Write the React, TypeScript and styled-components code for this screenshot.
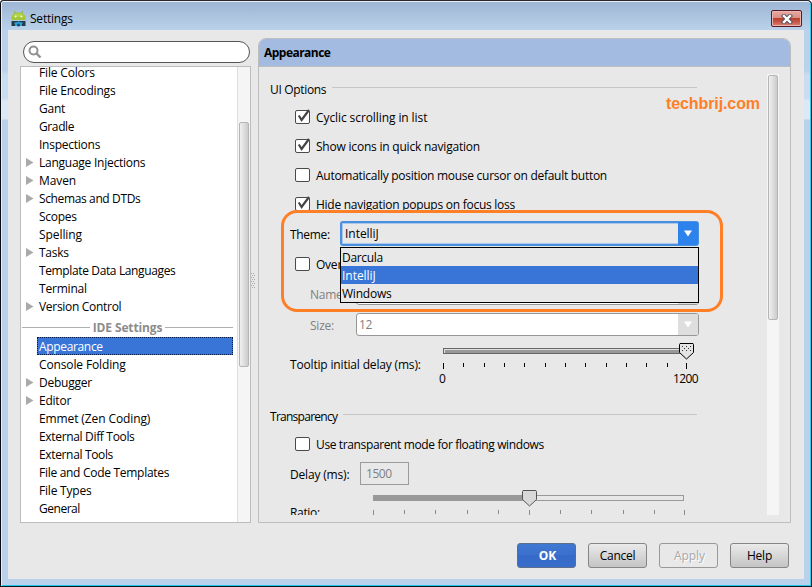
import React from 'react';
import styled, { createGlobalStyle, css } from 'styled-components';

const Global = createGlobalStyle`
  * { box-sizing: border-box; }
  html, body { margin: 0; padding: 0; }
  body {
    width: 812px;
    height: 587px;
    overflow: hidden;
    font-family: "Open Sans", "Noto Sans", sans-serif;
    font-size: 12px;
    line-height: 18px;
    color: #000;
  }
`;

const Frame = styled.div`
  position: relative;
  display: flex;
  flex-direction: column;
  width: 812px;
  height: 587px;
  padding: 1px 2px 2px 2px;
  background: linear-gradient(#9bb4d2 0, #b9d1ea 30px, #b9d1ea 70px, #cadcef 75px, #cadcef 98px, #dbe8f6 101px, #dbe8f6 119px, #b9d1ea 120px, #b9d1ea 100%);
  box-shadow: inset 0 1px #29272c, inset 1px 0 #0b0b0d, inset -1px 0 #0b2026, inset 0 -1px #071a20,
    inset 0 2px #e8f1fa, inset 2px 0 #dff0fb, inset -2px 0 #35cdee, inset 0 -2px #25c5ea;
  border-radius: 4px 5px 0 0;
`;

const TitleBar = styled.header`
  display: flex;
  align-items: flex-start;
  height: 29px;
  padding: 9px 8px 0 9px;
`;

const Label = styled.span<{ $track?: number; $muted?: boolean }>`
  letter-spacing: ${p => (p.$track ?? -0.2) - 0.03}px;
  white-space: nowrap;
  ${p => p.$muted && css`color: #808080;`}
`;

const WindowTitle = styled(Label)`
  flex: 1;
  margin-left: 4px;
`;

const CloseButton = styled.button`
  display: flex;
  align-items: center;
  justify-content: center;
  width: 31px;
  height: 17px;
  padding: 0;
  border: 1px solid #561a24;
  border-radius: 2px;
  background: linear-gradient(#e8aaa2 0, #dc8e84 45%, #b8402c 50%, #c8594a 75%, #d98478 100%);
  box-shadow: inset 0 0 0 1px #e9b5ae;
`;

const Client = styled.main`
  display: flex;
  flex-direction: column;
  flex: 1;
  margin: 0 6px 6px;
  background: #e8e8e8;
`;

const Columns = styled.div`
  display: flex;
  height: 493px;
  padding: 8px 0 0 12px;
`;

const Sidebar = styled.aside`
  display: flex;
  flex-direction: column;
  width: 231px;
  padding-top: 3px;
`;

const SearchField = styled.div`
  display: flex;
  align-items: center;
  width: 227px;
  height: 22px;
  margin: 0 0 3px 3px;
  padding-left: 4px;
  border: 1px solid #555;
  border-radius: 11px;
  background: #fff;
`;

const TreeBox = styled.div`
  display: flex;
  flex: 1;
  overflow: hidden;
  border: 1px solid #bcbcbc;
  background: #fff;
`;

const TreeList = styled.div`
  flex: 1;
  height: 480px;
  margin-top: -4px;
`;

const TreeRow = styled.div`
  display: flex;
  align-items: flex-start;
  height: 18px;
  padding: 0 4px 0 5px;
`;

const ArrowSlot = styled.span`
  display: flex;
  width: 11px;
  margin-top: 5px;
`;

const TreeText = styled(Label)<{ $selected?: boolean }>`
  flex: 1;
  height: 18px;
  padding: 1px 0 0 2px;
  ${p => p.$selected
    ? css`
        padding: 0 0 0 1px;
        border: 1px dotted #001a4d;
        background: #3875d7;
        color: #fff;
        line-height: 18px;
      `
    : ''}
`;

const Divider = styled.div`
  display: flex;
  align-items: center;
  gap: 3px;
  height: 22px;
  padding: 3px 4px 0 1px;
  color: #8c8c8c;
  font-weight: bold;
  &::before, &::after {
    content: "";
    flex: 1;
    height: 1px;
    margin-top: -1px;
    background: #b0b0b0;
  }
`;

const TreeScroll = styled.div`
  width: 13px;
  border-left: 1px solid #dedede;
  background: #f5f5f5;
  padding: 55px 1px 0;
`;

const Thumb = styled.div`
  width: 10px;
  height: 245px;
  border: 1px solid #b5b5b5;
  border-radius: 2px;
  background: linear-gradient(90deg, #f0f0f0, #e2e2e2 40%, #cbcbcb);
`;

const Splitter = styled.div`
  display: flex;
  align-items: center;
  width: 7px;
`;

const Panel = styled.section`
  position: relative;
  display: flex;
  flex-direction: column;
  width: 533px;
  border: 1px solid #bdbdbd;
  border-radius: 8px 8px 0 0;
`;

const PanelHeader = styled.h1`
  height: 28px;
  margin: 0;
  padding: 5px 5px 0;
  border-bottom: 1px solid #bdbdbd;
  border-radius: 7px 7px 0 0;
  background: #a3bae1;
  font-size: 12px;
  line-height: 18px;
`;

const PanelBody = styled.div`
  display: flex;
  height: 448px;
  overflow: hidden;
`;

const Form = styled.div`
  width: 508px;
  padding: 12px 70px 0 11px;
`;

const PanelScroll = styled.div`
  width: 12px;
  margin-top: 7px;
  padding: 1px;
  background: #f5f5f5;
`;

const SectionTitle = styled.div<{ $gap: number }>`
  display: flex;
  align-items: center;
  gap: 6px;
  height: 20px;
  margin: ${p => p.$gap}px 0 4px;
  padding-top: 1px;
  &::after {
    content: "";
    flex: 1;
    height: 1px;
    margin-top: -4px;
    background: #c6c6c6;
  }
`;

const CheckRow = styled.label`
  display: flex;
  align-items: center;
  gap: 6px;
  height: 29px;
  padding: 0 0 0 25px;
  svg { margin-top: -2px; }
`;

const Field = styled.div<{ $indent: number; $labelWidth: number }>`
  display: grid;
  grid-template-columns: ${p => p.$labelWidth}px 1fr;
  align-items: center;
  height: 31px;
  margin-right: -2px;
  padding: 0 0 2px ${p => p.$indent}px;
  > span { padding-top: 2px; }
`;

const Combo = styled.div<{ $active?: boolean }>`
  display: flex;
  justify-content: space-between;
  height: 23px;
  padding-left: 2px;
  border: 1px solid #979797;
  border-radius: 3px;
  background: #fff;
  line-height: 21px;
  ${p => p.$active && css`
    height: 25px;
    margin-top: -1px;
    padding-left: 3px;
    border: 2px solid #4a90dd;
    background: #e8e8e8;
    box-shadow: inset 0 0 0 1px #a9c8ec;
  `}
`;

const ComboArrow = styled.span<{ $active?: boolean }>`
  display: flex;
  align-items: center;
  justify-content: center;
  width: 20px;
  border-radius: 0 2px 2px 0;
  background: ${p => (p.$active ? '#2e82ec' : '#dedede')};
  ${p => p.$active && css`
    margin: -1px -1px -1px 0;
    width: 20px;
  `}
`;

const ThemeField = styled.div`
  position: relative;
`;

const Popup = styled.ul`
  position: absolute;
  z-index: 1;
  top: 25px;
  left: 0;
  right: 0;
  margin: 0;
  padding: 0;
  border: 1px solid #000;
  background: #e8e8e8;
  list-style: none;
`;

const Option = styled.li<{ $selected?: boolean }>`
  height: 18px;
  padding: 1px 0 0 1px;
  ${p => p.$selected && css`
    background: #3875d7;
    color: #fff;
  `}
`;

const SliderRow = styled.div<{ $top: number }>`
  display: flex;
  height: 50px;
  padding: ${p => p.$top}px 0 0 20px;
`;

const SliderLabel = styled(Label)<{ $top: number; $width: number }>`
  width: ${p => p.$width}px;
  margin-top: ${p => p.$top}px;
`;

const SliderColumn = styled.div`
  margin-right: -4px;
`;

const Scale = styled.div`
  display: flex;
  justify-content: space-between;
  margin: -8px 0 0 -1px;
  width: 259px;
`;

const NumberField = styled.div`
  width: 49px;
  height: 23px;
  padding-left: 5px;
  border: 1px solid #9b9b9b;
  line-height: 22px;
`;

const Highlight = styled.div`
  position: absolute;
  z-index: 2;
  left: 22px;
  top: 171px;
  width: 442px;
  height: 102px;
  border: 3px solid #ff7f27;
  border-radius: 16px;
`;

const Watermark = styled.div`
  position: absolute;
  left: 407px;
  top: 55px;
  color: #ff7f27;
  font: bold 16px/20px "Liberation Sans", sans-serif;
  letter-spacing: -0.1px;
`;

const Footer = styled.footer`
  display: flex;
  justify-content: flex-end;
  gap: 12px;
  padding: 20px 15px 0 0;
`;

const Button = styled.button<{ $kind?: 'primary' | 'disabled' }>`
  width: 59px;
  height: 25px;
  padding: 0;
  border: 1px solid #858585;
  border-radius: 3px;
  background: linear-gradient(#eaeaea, #c4c4c4);
  color: #000;
  font: inherit;
  line-height: 23px;
  ${p => p.$kind === 'primary' && css`
    border-color: #5c6e8c;
    padding-left: 2px;
    background: linear-gradient(#3f78d2 0, #3b70cd 48%, #366ac8 50%, #396dca 100%);
    color: #fff;
    font-weight: bold;
  `}
  ${p => p.$kind === 'disabled' && css`
    border-color: #999;
    padding-left: 2px;
    background: #e8e8e8;
    color: #a8a8a8;
    text-shadow: 1px 1px #fff;
  `}
`;

const AndroidIcon = () => (
  <svg width="15" height="17" viewBox="0 0 15 17">
    <path d="M3 1l2 3M12 1l-2 3" stroke="#8fae35" strokeWidth="1" />
    <path d="M0.5 10V8c0-3.500 3-5.500 7-5.500s7 2 7 5.500v2z" fill="#a4c639" />
    <path d="M2 7c1-2.500 3-3.500 5.500-3.500S12 4.500 13 7z" fill="#b5d44c" />
    <circle cx="4.600" cy="6.500" r=".9" fill="#f2f8dc" />
    <circle cx="10.400" cy="6.500" r=".9" fill="#f2f8dc" />
    <path d="M0.500 11h14v5h-14z" fill="#263a48" />
    <path d="M4 16v-2l-1-1 2-1 1 .6 1-1h1l1 1 1-.6 2 1-1 1v2z" fill="#2a9fd8" />
    <circle cx="7.500" cy="15" r="1.500" fill="#1d4965" />
  </svg>
);

const CloseIcon = () => (
  <svg width="12" height="10" viewBox="0 0 12 10">
    <path d="M3 2l6 6M9 2l-6 6" stroke="#4c4f5f" strokeWidth="4.200" strokeLinecap="square" />
    <path d="M3 2l6 6M9 2l-6 6" stroke="#fff" strokeWidth="2.400" strokeLinecap="square" />
  </svg>
);

const SearchIcon = () => (
  <svg width="14" height="14" viewBox="0 0 14 14">
    <circle cx="5.500" cy="5.500" r="4" fill="none" stroke="#919191" strokeWidth="2" />
    <path d="M8.500 8.500l4 4" stroke="#919191" strokeWidth="2.400" />
  </svg>
);

const TreeArrow = () => (
  <svg width="8" height="9" viewBox="0 0 8 9">
    <path d="M0 0l7.500 4.500L0 9z" fill="#aaa" />
  </svg>
);

const DownArrow = () => (
  <svg width="8" height="7" viewBox="0 0 8 7">
    <path d="M0 .5h8L4 6.500z" fill="#fff" />
  </svg>
);

const Grip = () => (
  <svg width="5" height="16" viewBox="0 0 5 16">
    {[0, 2, 4, 6, 8, 10, 12, 14].map(y => (
      <path key={y} d={y % 4 ? `M1 ${y}h1v1h-1zM3 ${y}h1v1h-1z` : `M0 ${y}h1v1h-1zM2 ${y}h1v1h-1z`} fill="#aaa" />
    ))}
  </svg>
);

const CheckBox = ({ checked }: { checked?: boolean }) => (
  <svg width="15" height="16" viewBox="0 0 15 16">
    <rect x=".5" y="1.500" width="14" height="13" rx="1.500" fill="#fff" stroke="#4a4a4a" />
    {checked && <path d="M3.800 6.500L6.600 11 14 1" fill="none" stroke="#454545" strokeWidth="2.200" />}
  </svg>
);

const thumb = (x: number) => `M${x - 6.5} .5h13l.5 1v8l-7 6.500-7-6.500v-8z`;

const DelaySlider = () => {
  const ticks = [3, 23, 44, 64, 84, 105, 125, 145, 166, 186, 206, 227, 246];
  return (
    <svg width="256" height="30" viewBox="0 0 256 30" shapeRendering="crispEdges">
      <path d="M3 5h243v6H3z" fill="#666" />
      <path d="M4 6h242v4H4z" fill="#e0e0e0" />
      <path d="M5 7h241v3H5z" fill="#989898" />
      <path d={thumb(246.5)} fill="#e4e4e4" stroke="#000" shapeRendering="auto" />
      <path d="M242 3h1v1h-1zM246 3h1v1h-1zM250 3h1v1h-1zM244 5h1v1h-1zM248 5h1v1h-1zM242 7h1v1h-1zM246 7h1v1h-1zM250 7h1v1h-1z" fill="#333" />
      {ticks.map((x, i) => (
        <rect key={x} x={x} y={20} width="1" height={i === 0 || i === 12 ? 6 : 4} fill="#000" />
      ))}
    </svg>
  );
};

const RatioSlider = () => {
  const ticks = [0, 31, 62, 94, 125, 156, 187, 218, 250, 281, 311];
  return (
    <svg width="314" height="30" viewBox="0 0 314 30" shapeRendering="crispEdges">
      <path d="M0 5h311v6H0z" fill="#999" />
      <path d="M157 6h153v4H157z" fill="#e8e8e8" />
      <path d={thumb(156.5)} fill="#d8d8d8" stroke="#555" shapeRendering="auto" />
      {ticks.map((x, i) => (
        <rect key={x} x={x} y={20} width="1" height={i % 5 === 0 ? 6 : 4} fill="#8c8c8c" />
      ))}
    </svg>
  );
};

type Item = [name: string, track: number, expandable?: boolean];

const projectItems: Item[] = [
  ['File Colors', -0.14], ['File Encodings', -0.16], ['Gant', -0.2], ['Gradle', -0.36],
  ['Inspections', -0.22], ['Language Injections', -0.22, true], ['Maven', -0.05, true],
  ['Schemas and DTDs', -0.34, true], ['Scopes', -0.25], ['Spelling', -0.04], ['Tasks', -0.25, true],
  ['Template Data Languages', -0.34], ['Terminal', -0.17], ['Version Control', -0.27, true],
];

const ideItems: Item[] = [
  ['Appearance', -0.31], ['Console Folding', -0.1], ['Debugger', -0.2, true], ['Editor', -0.2, true],
  ['Emmet (Zen Coding)', -0.08], ['External Diff Tools', -0.3], ['External Tools', -0.32],
  ['File and Code Templates', -0.26], ['File Types', -0.17], ['General', -0.45],
];

const Rows = ({ items, selected }: { items: Item[]; selected?: string }) => (
  <>
    {items.map(([name, track, expandable]) => (
      <TreeRow key={name}>
        <ArrowSlot>{expandable && <TreeArrow />}</ArrowSlot>
        <TreeText $track={track} $selected={name === selected}>{name}</TreeText>
      </TreeRow>
    ))}
  </>
);

const Check = ({ text, track, checked }: { text: string; track: number; checked?: boolean }) => (
  <CheckRow>
    <CheckBox checked={checked} />
    <Label $track={track}>{text}</Label>
  </CheckRow>
);

export default function App() {
  return (
    <>
      <Global />
      <Frame>
        <TitleBar>
          <AndroidIcon />
          <WindowTitle $track={-0.19}>Settings</WindowTitle>
          <CloseButton aria-label="Close"><CloseIcon /></CloseButton>
        </TitleBar>
        <Client>
          <Columns>
            <Sidebar>
              <SearchField><SearchIcon /></SearchField>
              <TreeBox>
                <TreeList>
                  <Rows items={projectItems} />
                  <Divider><Label $track={-0.1}>IDE Settings</Label></Divider>
                  <Rows items={ideItems} selected="Appearance" />
                </TreeList>
                <TreeScroll><Thumb /></TreeScroll>
              </TreeBox>
            </Sidebar>
            <Splitter><Grip /></Splitter>
            <Panel>
              <PanelHeader><Label $track={-0.5}>Appearance</Label></PanelHeader>
              <PanelBody>
                <Form>
                  <SectionTitle $gap={0}><Label $track={-0.3}>UI Options</Label></SectionTitle>
                  <Check text="Cyclic scrolling in list" track={-0.06} checked />
                  <Check text="Show icons in quick navigation" track={-0.18} checked />
                  <Check text="Automatically position mouse cursor on default button" track={-0.25} />
                  <Check text="Hide navigation popups on focus loss" track={-0.23} checked />
                  <Field $indent={20} $labelWidth={50}>
                    <Label $track={-0.28}>Theme:</Label>
                    <ThemeField>
                      <Combo $active>
                        <Label $track={0}>IntelliJ</Label>
                        <ComboArrow $active><DownArrow /></ComboArrow>
                      </Combo>
                      <Popup>
                        <Option><Label $track={-0.3}>Darcula</Label></Option>
                        <Option $selected><Label $track={0}>IntelliJ</Label></Option>
                        <Option><Label $track={-0.2}>Windows</Label></Option>
                      </Popup>
                    </ThemeField>
                  </Field>
                  <Check text="Override" track={-0.2} />
                  <Field $indent={40} $labelWidth={46}>
                    <Label $muted>Name:</Label>
                    <Combo><span /><ComboArrow><DownArrow /></ComboArrow></Combo>
                  </Field>
                  <Field $indent={40} $labelWidth={46}>
                    <Label $muted>Size:</Label>
                    <Combo>
                      <Label $muted $track={-0.4}>12</Label>
                      <ComboArrow><DownArrow /></ComboArrow>
                    </Combo>
                  </Field>
                  <SliderRow $top={2}>
                    <SliderLabel $track={-0.14} $top={13} $width={150}>Tooltip initial delay (ms):</SliderLabel>
                    <SliderColumn>
                      <DelaySlider />
                      <Scale><Label>0</Label><Label $track={-0.6}>1200</Label></Scale>
                    </SliderColumn>
                  </SliderRow>
                  <SectionTitle $gap={15}><Label $track={-0.7}>Transparency</Label></SectionTitle>
                  <Check text="Use transparent mode for floating windows" track={-0.34} />
                  <Field $indent={20} $labelWidth={70}>
                    <Label $track={-0.14}>Delay (ms):</Label>
                    <NumberField><Label $muted $track={-0.4}>1500</Label></NumberField>
                  </Field>
                  <SliderRow $top={0}>
                    <SliderLabel $track={-0.3} $top={14} $width={83}>Ratio:</SliderLabel>
                    <RatioSlider />
                  </SliderRow>
                </Form>
                <PanelScroll><Thumb /></PanelScroll>
              </PanelBody>
              <Highlight />
              <Watermark>techbrij.com</Watermark>
            </Panel>
          </Columns>
          <Footer>
            <Button $kind="primary">OK</Button>
            <Button><Label>Cancel</Label></Button>
            <Button $kind="disabled"><Label $track={0}>Apply</Label></Button>
            <Button><Label>Help</Label></Button>
          </Footer>
        </Client>
      </Frame>
    </>
  );
}
